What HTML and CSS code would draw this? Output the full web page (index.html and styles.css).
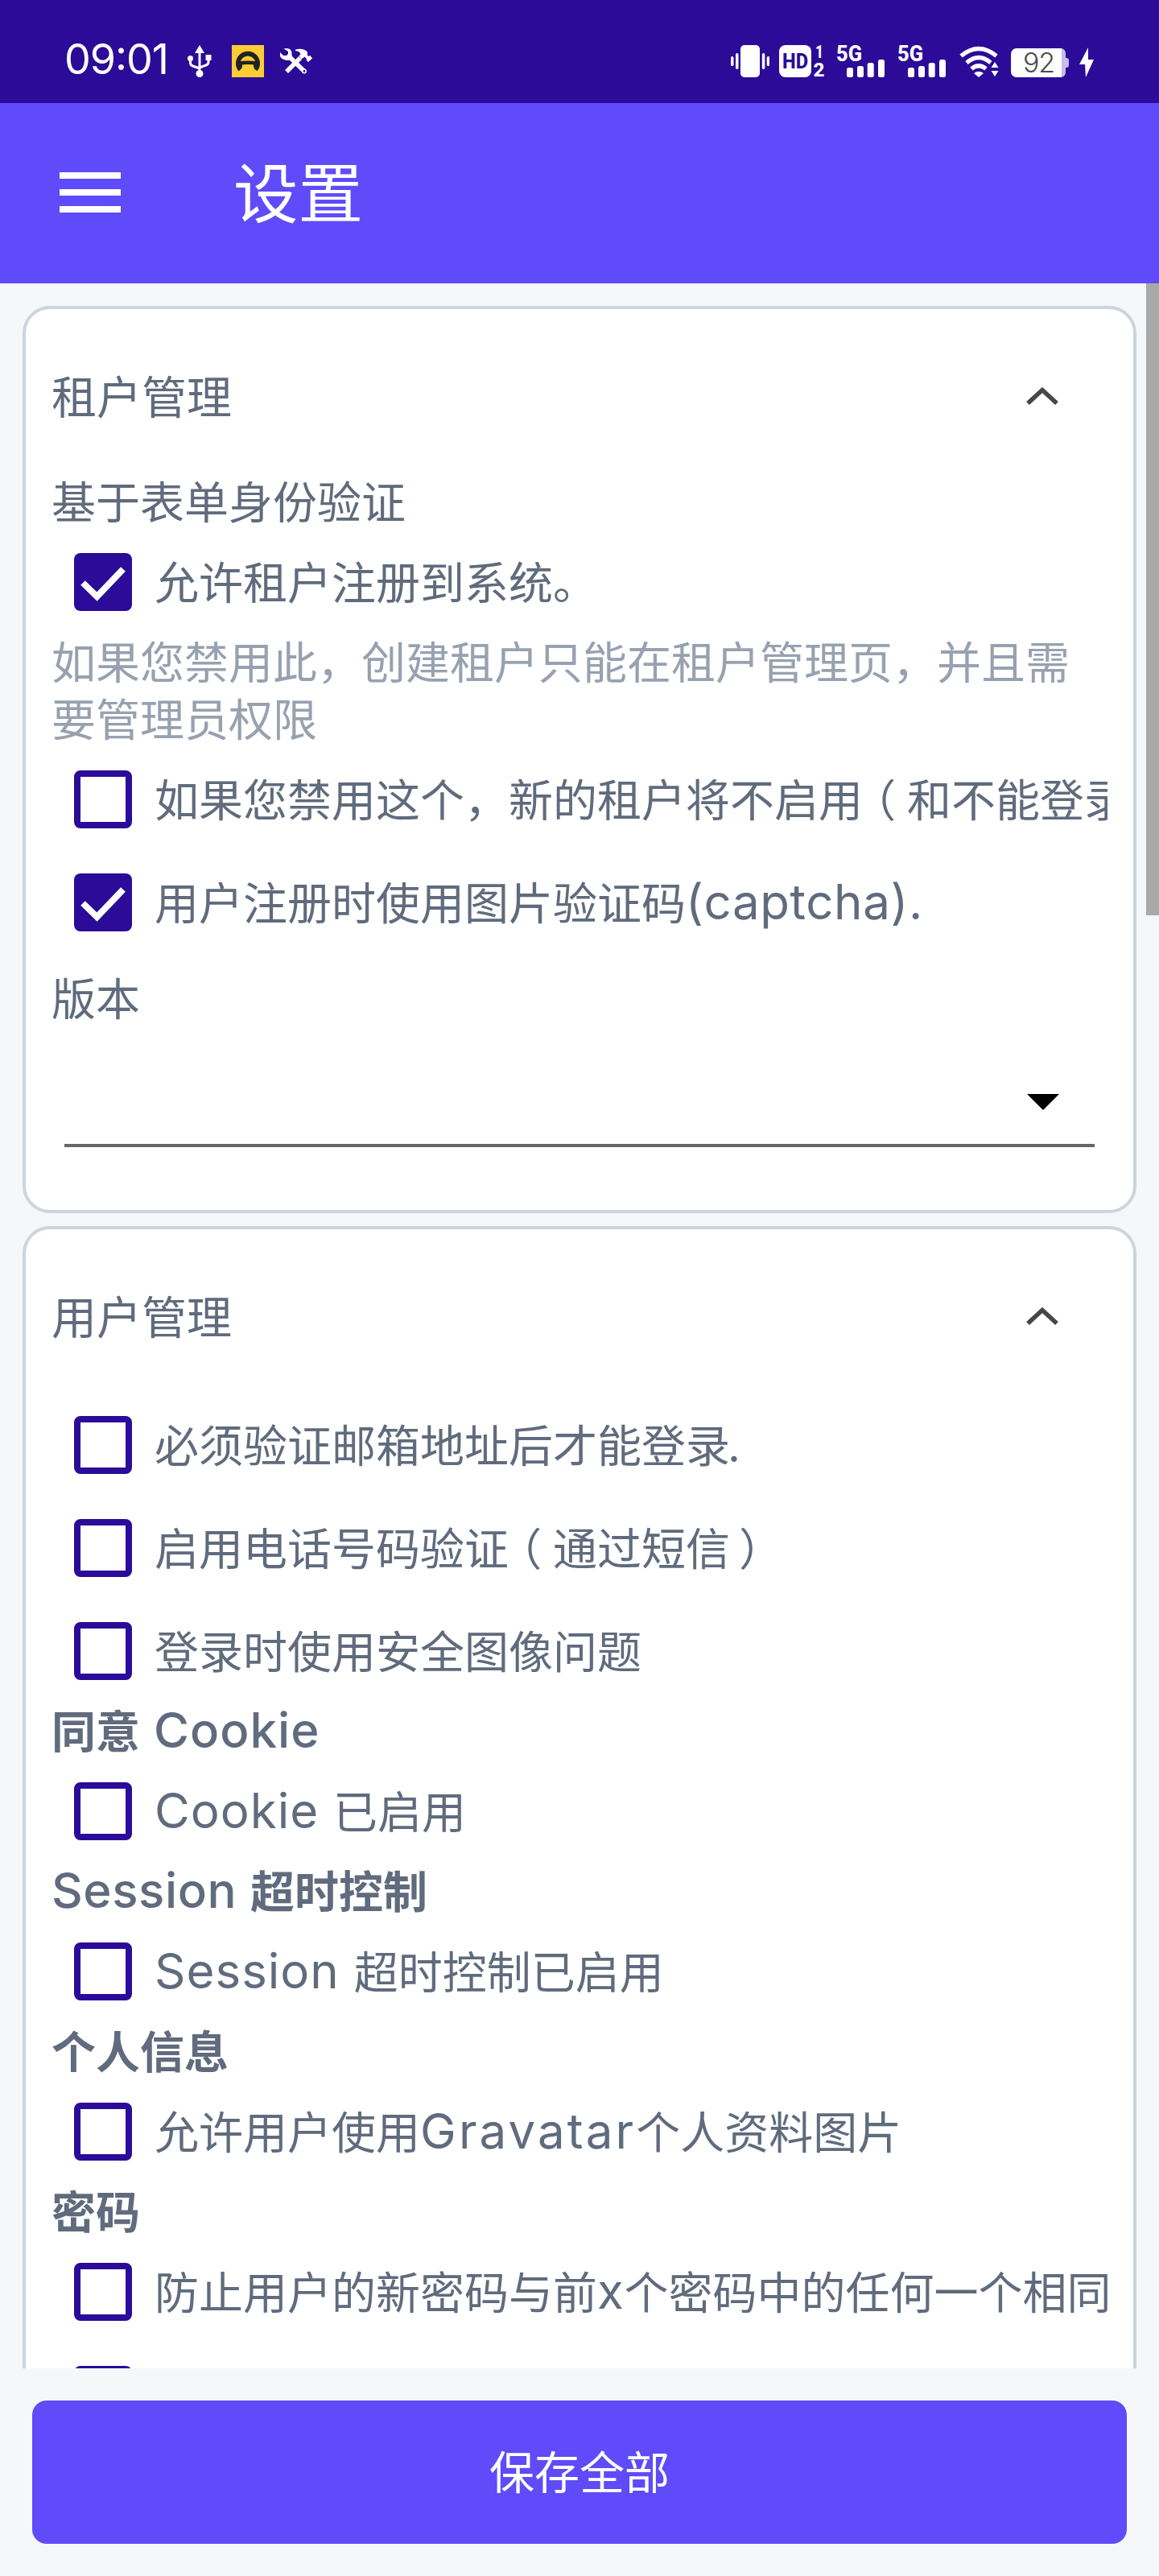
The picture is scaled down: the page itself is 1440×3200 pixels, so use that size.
FILE: index.html
```html
<!DOCTYPE html>
<html lang="zh-CN">
<head>
<meta charset="utf-8">
<title>设置</title>
<link rel="stylesheet" href="styles.css">
</head>
<body>
<div class="screen">
  <div class="status">
    <div class="status-left">
      <svg class="clock" width="130" height="48" viewBox="0 0 130 48"><text x="-1" y="42" textLength="130">09:01</text></svg>
      <svg class="usb" width="30" height="40" viewBox="0 0 30 40" fill="none" stroke="#fff" stroke-width="3"><path d="M15 8V33M3.500 17v5q0 3 3 4l8.500 3M26 16v5q0 3-3 4l-8 3"/><g fill="#fff" stroke="none"><path d="M15 0l6 10H9z"/><circle cx="3.500" cy="16.500" r="3.500"/><path d="M22.500 12H29.500V19H22.500z"/><circle cx="15" cy="35.500" r="4.500"/></g></svg>
      <svg class="app" width="40" height="40" viewBox="0 0 40 40"><path fill="#ffcc33" d="M0 0h40v40H0z"/><path fill="none" stroke="#1f2423" stroke-width="5.600" d="M10.500 30.500A12.200 12.200 0 1 1 29.500 30.500"/><path fill="none" stroke="#1f2423" stroke-width="4.500" d="M9 22.500q11-1.500 22 0"/><path fill="#1f2423" d="M6 24h7v3l-2 2-2 3zM34 24h-7v3l2 2-2 3z"/></svg>
      <svg class="tools" width="40" height="32" viewBox="0 0 40 32"><path d="M11 10L30 28.500M25 12L8 29" fill="none" stroke="#fff" stroke-width="5.600"/><circle cx="30" cy="28.500" r="3" fill="#fff"/><path fill="#fff" d="M4.500.5Q8-.5 11 .500 15 2 14.500 8l1 4-4 3Q2 15 0 10V5l4 4h4l2-2V4zM19 1.500Q29-1 34 4.500V9l2 1 1-1.500 3 4-5 4.500-2.500-2.500.5-1.500-2.500-2.500-4 3-3-4 2-2.500Q24 3.500 19 3z"/><circle cx="30" cy="28.500" r="1.400" fill="#2b0b98"/></svg>
    </div>
    <div class="status-right">
      <svg width="48" height="40" viewBox="0 0 48 40" fill="#fff"><rect x="12" width="24" height="40" rx="5"/><rect x="6" y="10" width="3.500" height="20" rx="1.700"/><rect y="14" width="3.500" height="12" rx="1.700"/><rect x="38.800" y="10" width="3.500" height="20" rx="1.700"/><rect x="44.700" y="14" width="3.500" height="12" rx="1.700"/></svg>
      <svg class="hd" width="57" height="40" viewBox="0 0 57 40"><rect width="40" height="40" rx="8" fill="#fff"/><text x="4" y="29" font-size="25" fill="#2b0b98" textLength="32" lengthAdjust="spacingAndGlyphs">HD</text><text x="45" y="16" font-size="22" fill="#fff" textLength="10" lengthAdjust="spacingAndGlyphs">1</text><text x="42.500" y="39" font-size="23" fill="#fff" textLength="14" lengthAdjust="spacingAndGlyphs">2</text></svg>
      <svg class="cell" width="60" height="40" viewBox="0 0 60 40" fill="#fff"><text x="-1" y="19.500" font-size="27" textLength="32" lengthAdjust="spacingAndGlyphs">5G</text><rect x="12" y="28" width="8" height="12" rx="2.500"/><rect x="25" y="26" width="8" height="14" rx="2.500"/><rect x="37.700" y="22" width="8" height="18" rx="2.500"/><rect x="51" y="18" width="8" height="22" rx="2.500"/></svg>
      <svg class="cell" width="60" height="40" viewBox="0 0 60 40" fill="#fff"><text x="-1" y="19.500" font-size="27" textLength="32" lengthAdjust="spacingAndGlyphs">5G</text><rect x="12" y="28" width="8" height="12" rx="2.500"/><rect x="25" y="26" width="8" height="14" rx="2.500"/><rect x="37.700" y="22" width="8" height="18" rx="2.500"/><rect x="51" y="18" width="8" height="22" rx="2.500"/></svg>
      <svg class="wifi" width="50" height="40" viewBox="0 0 50 40"><g fill="none" stroke="#fff" stroke-width="5.300"><path d="M2 13.500Q24-4.500 46 13.500"/><path d="M9 22Q24 9 39 22"/><path d="M15 29.500Q24 22 33 29.500"/></g><path fill="#fff" d="M24 40l-6-5q6-4.500 12 0z"/><path fill="#2b0b98" d="M36 26l7-9 7 9v14H37z"/><path fill="#fff" d="M44 21l4.500 7h-9zM44 39l4.500-7h-9z"/></svg>
      <svg class="battery" width="72" height="36" viewBox="0 0 72 36"><path fill="#c8bce8" d="M60 0h2a6 6 0 0 1 6 6v6h1a3 3 0 0 1 3 3v6a3 3 0 0 1-3 3h-1v6a6 6 0 0 1-6 6h-2z"/><path fill="#fff" d="M7 0h56v36H7a7 7 0 0 1-7-7V7a7 7 0 0 1 7-7z"/><text x="15" y="30" font-size="34" fill="#4b4b4b" textLength="40">92</text></svg>
      <svg width="18" height="37" viewBox="0 0 18 37"><path fill="#fff" d="M11 0L0 21h7l1 16 10-22h-7z"/></svg>
    </div>
  </div>
  <header class="appbar">
    <svg width="76" height="50" viewBox="0 0 76 50" fill="#fff"><path d="M0 0h76v8H0zM0 21h76v8H0zM0 42h76v8H0z"/></svg>
    <h1>设置</h1>
  </header>
  <main class="scroll">
    <section class="card">
      <div class="card-head"><span>租户管理</span><svg class="chevron" width="40" height="22" viewBox="0 0 40 22"><path d="M2 20L20 3.500 38 20"/></svg></div>
      <div class="label">基于表单身份验证</div>
      <div class="row"><i class="box checked"><svg width="72" height="72" viewBox="0 0 72 72"><path d="M11 37l17.500 17L61 20"/></svg></i><span>允许租户注册到系统。</span></div>
      <p class="hint">如果您禁用此，创建租户只能在租户管理页，并且需要管理员权限</p>
      <div class="row"><i class="box"></i><span>如果您禁用这个，新的租户将不启用<span class="open">（</span>和不能登录)</span></div>
      <div class="row"><i class="box checked"><svg width="72" height="72" viewBox="0 0 72 72"><path d="M11 37l17.500 17L61 20"/></svg></i><span>用户注册时使用图片验证码<span class="latin">(captcha).</span></span></div>
      <div class="label edition">版本</div>
      <div class="select"><svg width="40" height="20" viewBox="0 0 40 20"><path d="M0 0h40L20 20z"/></svg></div>
    </section>
    <section class="card">
      <div class="card-head"><span>用户管理</span><svg class="chevron" width="40" height="22" viewBox="0 0 40 22"><path d="M2 20L20 3.500 38 20"/></svg></div>
      <div class="row"><i class="box"></i><span>必须验证邮箱地址后才能登录<span class="stop">.</span></span></div>
      <div class="row"><i class="box"></i><span>启用电话号码验证<span class="open">（</span>通过短信<span class="close">）</span></span></div>
      <div class="row"><i class="box"></i><span>登录时使用安全图像问题</span></div>
      <div class="label strong">同意<span class="latin cookie"> Cookie</span></div>
      <div class="row"><i class="box"></i><span><span class="latin cookie">Cookie </span>已启用</span></div>
      <div class="label strong"><span class="latin">Session </span>超时控制</div>
      <div class="row"><i class="box"></i><span><span class="latin session">Session </span>超时控制已启用</span></div>
      <div class="label strong">个人信息</div>
      <div class="row"><i class="box"></i><span>允许用户使用<span class="latin wide">Gravatar</span>个人资料图片</span></div>
      <div class="label strong">密码</div>
      <div class="row"><i class="box"></i><span>防止用户的新密码与前<span class="latin">x</span>个密码中的任何一个相同</span></div>
      <div class="row"><i class="box"></i></div>
    </section>
    <div class="thumb"></div>
  </main>
  <footer class="actions"><button>保存全部</button></footer>
</div>
</body>
</html>
```

FILE: styles.css
```css
* { box-sizing: border-box; }
body {
  margin: 0;
  background: #f5f7f9;
  color: #606b7d;
  font-family: Inter, "Noto Sans CJK SC", sans-serif;
  font-size: 55px;
  line-height: 71px;
}
svg { display: block; flex: none; }
.screen { width: 1440px; height: 3200px; display: flex; flex-direction: column; overflow: hidden; }

/* Status bar */
.status { height: 128px; flex: none; background: #2b0b98; display: flex; justify-content: space-between; padding: 56px 81px 0 81px; }
.status-left, .status-right { display: flex; align-items: flex-start; }
.clock { margin-top: -6px; overflow: visible; fill: #fff; font: 400 52px Inter, sans-serif; }
.usb { margin-left: 22px; }
.app { margin-left: 25px; }
.tools { margin: 4px 0 0 20px; }
.hd, .cell { font-family: Roboto, sans-serif; font-weight: 800; overflow: visible; }
.hd { margin-left: 12px; }
.cell { margin-left: 15px; }
.cell + .cell { margin-left: 16px; }
.wifi { margin-left: 16px; }
.battery { margin: 4px 0 0 14px; font-family: Inter, sans-serif; font-weight: 300; }
.battery + svg { margin: 3px 0 0 13px; }

/* App bar */
.appbar { height: 224px; flex: none; background: #5f4bfa; display: flex; align-items: center; padding: 0 74px; gap: 140px; color: #fff; }
.appbar svg { margin-top: -2px; }
.appbar h1 { margin: 2px 0 0; font-size: 80.5px; font-weight: 400; line-height: 100px; }

/* Scrolling content */
.scroll { position: relative; height: 2590px; flex: none; overflow: hidden; padding: 28px; display: flex; flex-direction: column; gap: 16px; }
.thumb { position: absolute; top: 0; right: 0; width: 16px; height: 785px; background: #a9a9a9; }
.card { flex: none; background: #fff; border: 4px solid #ced4da; border-radius: 34px; padding: 0 32px; overflow: hidden; }
.card:first-child { height: 1127px; }
.card-head { height: 204px; display: flex; align-items: center; justify-content: space-between; padding: 13px 61px 0 0; font-size: 56px; }
.card-head span { padding-top: 3px; }
.chevron { margin-bottom: 2px; fill: none; stroke: #47464c; stroke-width: 5.5; }
.label { height: 71px; padding-top: 1px; white-space: nowrap; }
.strong { font-weight: 700; }
.strong .latin { font-weight: 500; }
.hint { margin: 0; padding-top: 1px; margin-bottom: -1px; color: #97a1b0; }
.row { height: 128px; display: flex; align-items: center; padding-left: 28px; gap: 28px; overflow: hidden; white-space: nowrap; }
.row > span { padding-top: 3px; }
.box { width: 72px; height: 72px; flex: none; border: 8px solid #2b0b98; border-radius: 8px; }
.checked { border: 0; background: #2b0b98; }
.checked svg { fill: none; stroke: #fff; stroke-width: 8; }
.latin { font-size: 60px; line-height: 0; letter-spacing: 0.6px; }
.latin.session { letter-spacing: 1px; }
.latin.cookie { letter-spacing: 1px; }
.latin.wide { letter-spacing: 3.1px; }
.row .latin { font-weight: 400; }
.stop { margin-left: -3px; }
.open { margin: 0 0.25em 0 -0.25em; }
.close { margin-left: 0.2em; }
.edition { margin-top: 20px; }
.select { height: 149px; margin: 0 16px; border-bottom: 4px solid #666; display: flex; justify-content: flex-end; align-items: flex-end; padding: 0 44px 42px 0; }

/* Bottom action */
.actions { flex: 1; padding: 40px; display: flex; align-items: stretch; }
.actions button { flex: 1; border: 0; border-radius: 18px; background: #5f4bfa; color: #fff; font: 400 56px/71px Inter, "Noto Sans CJK SC", sans-serif; padding: 2px 0 0; }
```
